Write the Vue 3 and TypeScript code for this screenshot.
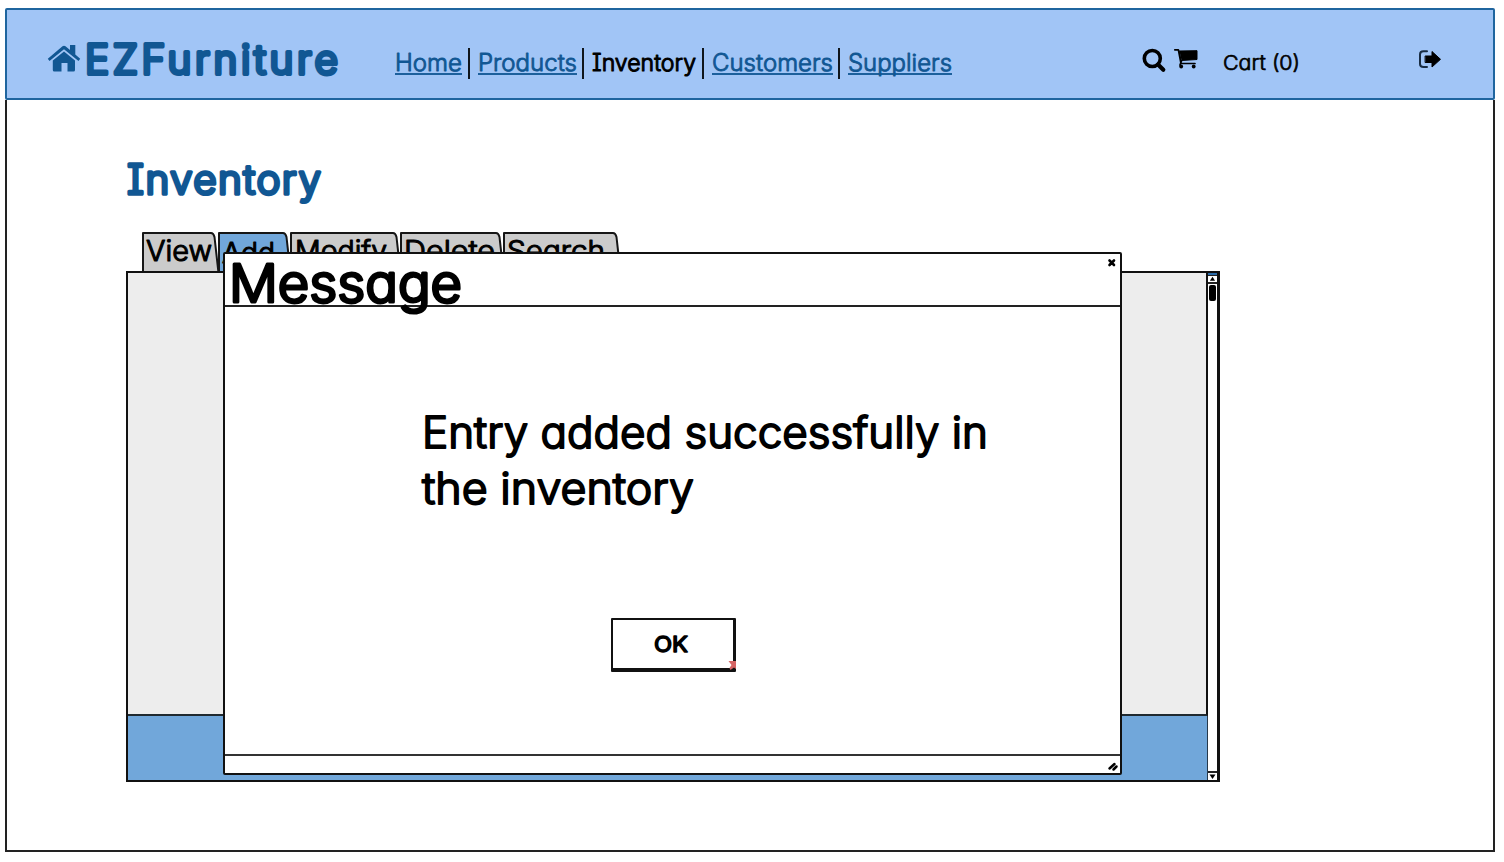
<script setup lang="ts">
import { h, type FunctionalComponent } from 'vue'

interface LabelProps {
  text: string
  width: number
  height: number
  baseline: number
  inset?: number
  spaced?: boolean
}

/* Lettering fitted to a fixed width, with softly rounded strokes. */
const Label: FunctionalComponent<LabelProps> = (props) => {
  const inset = props.inset ?? 1
  return h('svg', { width: props.width, height: props.height, 'aria-label': props.text }, [
    h('text', {
      x: -inset,
      y: props.baseline,
      textLength: props.width + inset * 2,
      lengthAdjust: props.spaced ? 'spacing' : 'spacingAndGlyphs',
    }, props.text),
  ])
}
Label.props = { text: String, width: Number, height: Number, baseline: Number, inset: Number, spaced: Boolean }

const links = [
  { text: 'Home', width: 65, current: false },
  { text: 'Products', width: 97, current: false },
  { text: 'Inventory', width: 102, current: true },
  { text: 'Customers', width: 119, current: false },
  { text: 'Suppliers', width: 102, current: false },
]

const tabs = [
  { text: 'View', width: 64, box: 76, pad: 5, active: false },
  { text: 'Add', width: 51, box: 72, pad: 5, active: true },
  { text: 'Modify', width: 90, box: 110, pad: 6, active: false },
  { text: 'Delete', width: 89, box: 103, pad: 5, active: false },
  { text: 'Search', width: 96, box: 117, pad: 5, active: false },
]
</script>

<template>
  <div class="page">
    <header class="bar">
      <svg class="home" width="34" height="28" viewBox="0 0 34 28">
        <path d="M17 7.500 28 16.500V26q0 1.500-1.500 1.500H20.500V19h-6v8.500H7.300q-1.500 0-1.500-1.500v-9.500z" />
        <path d="M.8 14.800 15.500 2.300q1.500-1.200 3 0L23 6V1h5.300v9.500L33.200 14.800l-1.700 2.200L17 5.200 2.500 17z" />
      </svg>
      <Label class="logo" text="EZFurniture" :width="249" :height="50" :baseline="41" :inset="2" spaced />
      <nav class="nav">
        <a v-for="l in links" :key="l.text" class="link" :class="{ current: l.current }">
          <Label class="nav-text" :text="l.text" :width="l.width" :height="25" :baseline="22.500" />
        </a>
      </nav>
      <svg class="search" width="24" height="24" viewBox="0 0 24 24">
        <circle cx="10.300" cy="9.500" r="8" />
        <path d="M16 15.500l5.300 5.200" />
      </svg>
      <svg class="cart" width="24" height="20" viewBox="0 0 24 20">
        <path class="solid" d="M5.500 2 23 1.700V10.500L7.500 11.500z" />
        <path class="wire" d="M.8 .8h3.600L7 14.500H21M7.500 12l-1.500 4" />
        <circle cx="7.200" cy="17.500" r="1.900" /><circle cx="19.700" cy="17.500" r="1.900" />
      </svg>
      <Label class="cart-text" text="Cart (0)" :width="75" :height="28" :baseline="21.500" />
      <svg class="exit" width="24" height="20" viewBox="0 0 24 20">
        <path class="wire" d="M9 1.300H5.500Q2 1.300 2 4.500v9.500q0 3 3.500 3H9" />
        <path class="solid" d="M7.500 6H14V1.500l8.500 7.800-8.500 7.700v-4.500H7.500z" />
      </svg>
    </header>

    <main class="content">
      <Label class="heading" text="Inventory" :width="192" :height="52" :baseline="38.500" :inset="1" spaced />
      <div class="tabs">
        <div v-for="t in tabs" :key="t.text" class="tab" :class="{ active: t.active }" :style="{ width: t.box + 'px', paddingLeft: t.pad + 'px' }">
          <svg class="tab-shape" width="100%" height="41">
            <rect x="1" y="1" :width="t.box - 8" height="40" class="fill" />
            <path :d="`M1 41V1H${t.box - 7}q2.500 0 3.500 4l4 36`" class="fill edge" />
          </svg>
          <Label class="tab-text" :text="t.text" :width="t.width" :height="38" :baseline="t.active ? 31 : 29" />
        </div>
      </div>
      <section class="panel">
        <div class="body">
          <div class="pane"></div>
          <div class="foot"></div>
        </div>
        <div class="scroll">
          <div class="cap"></div>
          <svg class="arrow up" width="9" height="7" viewBox="0 0 9 7"><path d="M4.500 1 7.500 5.500h-6z" /></svg>
          <div class="thumb"></div>
          <div class="track"></div>
          <svg class="arrow down" width="9" height="7" viewBox="0 0 9 7"><path d="M1.500 1.500h6l-3 4.500z" /></svg>
        </div>
      </section>
    </main>

    <div class="dialog" role="dialog">
      <div class="dialog-head">
        <Label class="dialog-title" text="Message" :width="227" :height="52" :baseline="48" :inset="3" />
        <svg class="close" width="8" height="8" viewBox="0 0 8 8"><path d="M1.500 1.500l4.500 4.500M6 1.500l-4.500 4.500" /></svg>
      </div>
      <div class="dialog-body">
        <div class="message">
          <Label text="Entry added successfully in" :width="560" :height="56" :baseline="41" :inset="3" />
          <Label class="second" text="the inventory" :width="270" :height="56" :baseline="41" :inset="1" />
        </div>
        <button class="ok">
          <Label text="OK" :width="32" :height="26" :baseline="21" />
          <svg class="mark" width="8" height="9" viewBox="0 0 8 9"><path d="M.5 0H8v8L6 6.500 2.500 9 1.500 7 3.500 4z" /></svg>
        </button>
      </div>
      <div class="dialog-foot">
        <svg width="10" height="9" viewBox="0 0 10 9"><path d="M1.500 6.500l5-4.500M5.500 7.500l3-3" /></svg>
      </div>
    </div>
  </div>
</template>

<style>
body { background: #fff; }
</style>

<style scoped>
.page {
  position: relative;
  box-sizing: border-box;
  width: 1504px;
  height: 862px;
  padding: 8px 9px 10px 5px;
  font-family: Inter, "Open Sans", sans-serif;
  font-feature-settings: "cv11" 1, "cv08" 1;
  display: flex;
  flex-direction: column;
}
svg {
  display: block;
  flex: none;
  overflow: visible;
  fill: #000;
  stroke: #000;
  stroke-width: 1;
  stroke-linejoin: round;
  stroke-linecap: round;
}
.bar {
  box-sizing: border-box;
  height: 92px;
  flex: none;
  display: flex;
  align-items: flex-start;
  border: 2px solid #1f659f;
  border-radius: 2px;
  background: #a1c5f6;
}
.home { margin: 34px 0 0 40px; fill: #115793; stroke: none; }
.logo {
  margin: 23px 0 0 6px;
  fill: #115793;
  stroke: #115793;
  stroke-width: 4;
  font-size: 40.500px;
  font-weight: 300;
}
.nav { display: flex; margin: 38px 0 0 58px; }
.link { position: relative; padding: 0 1px 0 2px; }
.link + .link { margin-left: 14.500px; }
.link + .link::before {
  content: "";
  position: absolute;
  left: -9px;
  top: 0;
  width: 2px;
  height: 31px;
  background: #10161c;
}
.nav-text {
  fill: #115793;
  stroke: #115793;
  stroke-width: .9;
  font-size: 23.500px;
  font-weight: 300;
}
.link::after {
  content: "";
  display: block;
  height: 2px;
  margin: 0 -1px 0 -1px;
  background: #1c609c;
}
.link.current::after { background: none; }
.current .nav-text { fill: #000; stroke: #000; stroke-width: 1.1; }
.search { margin: 39px 0 0 190px; fill: none; stroke-width: 3.6; }
.search path { stroke-width: 4.2; }
.cart { margin: 39px 0 0 8px; }
.cart .solid { stroke: #000; stroke-width: 1; }
.cart .wire { fill: none; stroke-width: 1.7; }
.cart circle { stroke: none; }
.cart-text { margin: 38px 0 0 26px; font-size: 20.500px; font-weight: 300; stroke-width: .7; }
.exit { margin: 40px 0 0 119px; }
.exit .wire { fill: none; stroke: #182c42; stroke-width: 2; }
.exit .solid { stroke-width: 1; }
.content {
  box-sizing: border-box;
  flex: 1;
  border: 2px solid #222;
  border-top: 0;
  padding: 55px 0 0 121px;
}
.heading {
  fill: #115793;
  stroke: #115793;
  stroke-width: 3.4;
  font-size: 40.500px;
  font-weight: 300;
}
.tabs { display: flex; height: 41px; margin: 25px 0 0 14px; }
.tab { position: relative; box-sizing: border-box; flex: none; }
.tab-shape { position: absolute; left: 0; top: 0; }
.fill { fill: #cbcbcb; stroke: none; }
.edge { stroke: #161616; stroke-width: 2; }
.active .fill { fill: #71a7da; }
.tab-text { position: relative; font-size: 29px; font-weight: 300; stroke-width: 1.2; }
.panel {
  position: relative;
  box-sizing: border-box;
  display: flex;
  width: 1094px;
  height: 511px;
  margin: -2px 0 0 -2px;
  border: 2px solid #111;
  border-right-width: 3px;
  background: #71a7da;
}
.body { flex: 1; display: flex; flex-direction: column; }
.pane { flex: 1; background: #ededed; border-bottom: 2px solid #202a30; border-right: 2px solid #111; }
.foot { height: 64px; border-right: 1px solid #26394b; }
.scroll {
  display: flex;
  flex-direction: column;
  align-items: center;
  width: 9px;
  background: #fff;
}
.cap { width: 100%; height: 2px; background: #2b6ba8; border-bottom: 1px solid #222; }
.arrow { stroke: none; }
.up { width: 9px; height: 6px; border-bottom: 2px solid #222; }
.thumb { width: 7px; height: 16px; margin-top: 1px; border-radius: 2px; background: #000; }
.track { flex: 1; }
.down { width: 9px; border-top: 2px solid #222; }
.dialog {
  position: absolute;
  left: 223px;
  top: 252px;
  box-sizing: border-box;
  width: 899px;
  height: 523px;
  display: flex;
  flex-direction: column;
  border: 2px solid #111;
  border-radius: 2px;
  background: #fff;
}
.dialog-head {
  display: flex;
  justify-content: space-between;
  height: 51px;
  padding: 0 4px 0 7px;
  border-bottom: 2px solid #222;
}
.dialog-title { font-size: 52px; font-weight: 300; stroke-width: 3; }
.close { margin-top: 5px; fill: none; stroke-width: 2.6; }
.dialog-body {
  flex: 1;
  display: flex;
  flex-direction: column;
  align-items: flex-start;
}
.message {
  margin: 100px 0 0 200px;
  font-size: 43px;
  font-weight: 300;
}
.message svg { stroke-width: 1.9; }
.second { margin-left: -2px; }
.ok {
  position: relative;
  box-sizing: border-box;
  display: flex;
  align-items: center;
  width: 125px;
  height: 54px;
  margin: 99px 0 0 386px;
  padding: 0 0 1px 42px;
  border: solid #111;
  border-width: 2px 3px 4px 2px;
  border-radius: 1px;
  background: #fff;
  font: inherit;
  font-size: 22px;
  font-weight: 400;
}
.ok svg { stroke-width: 1.5; }
.ok .mark { position: absolute; right: -3px; bottom: -2px; fill: #d66464; stroke: none; }
.dialog-foot {
  box-sizing: border-box;
  display: flex;
  justify-content: flex-end;
  height: 19px;
  padding: 6px 2px 0 0;
  border-top: 2px solid #333;
}
.dialog-foot svg { fill: none; stroke-width: 2.5; }
</style>
